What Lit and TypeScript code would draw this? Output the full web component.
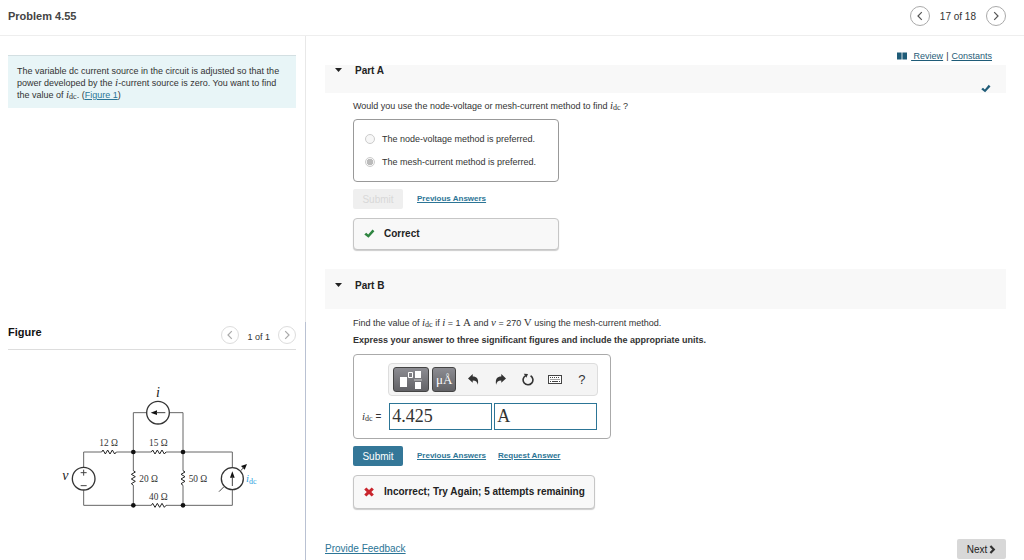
import { LitElement, html, svg, css } from "lit";
import { customElement, property, state } from "lit/decorators.js";

const chevron = (d: string) => html`<svg viewBox="0 0 10 10" width="10" height="10" aria-hidden="true">
  <path d=${d} fill="none" stroke="currentColor" stroke-width="1.2" />
</svg>`;
const LEFT = "M6.8 1.2 L3 5 L6.8 8.8";
const RIGHT = "M3.2 1.2 L7 5 L3.2 8.8";

const CHECK = "M0.3 6 L2.4 4 L4.6 6.1 L9.3 0.6 L11.4 2.5 L4.9 9.6 Z";
const CROSS = "M2.6 0.6 L5.5 3.3 L8.4 0.6 L10.8 2.8 L8 5.5 L10.8 8.2 L8.4 10.4 L5.5 7.7 L2.6 10.4 L0.2 8.2 L3 5.5 L0.2 2.8 Z";

const sub = () => html`<i class="m">i</i><sub>dc</sub>`;

const shared = css`
  * { box-sizing: border-box; }
  button, input { font-family: inherit; margin: 0; }
  button { cursor: pointer; }
  svg { display: block; }
  a { color: #2c7596; text-decoration: underline; }
  p, h1, h2 { margin: 0; }
  .m, sub, .r { font-family: "Liberation Serif", serif; line-height: 0; }
  .m, .r { font-size: 11px; }
  sub { font-size: 8px; vertical-align: -1px; }
`;

@customElement("page-stepper")
class PageStepper extends LitElement {
  @property() label = "";
  @property({ type: Boolean, reflect: true }) faint = false;

  static styles = [shared, css`
    :host { display: flex; align-items: center; gap: 10px; font-size: 10px; line-height: 12px; color: #333; }
    :host([faint]) { gap: 8px; font-size: 9px; }
    .round {
      display: grid; place-items: center; width: 20px; height: 20px; padding: 0;
      border: 1px solid #aaa; border-radius: 50%; background: #fff; color: #555;
    }
    :host([faint]) .round { width: 18px; height: 18px; border-color: #ddd; color: #aaa; }
    .label { padding-top: 3px; }
  `];

  render() {
    return html`
      <button class="round" aria-label="Previous">${chevron(LEFT)}</button>
      <span class="label">${this.label}</span>
      <button class="round" aria-label="Next">${chevron(RIGHT)}</button>`;
  }
}

@customElement("circuit-figure")
class CircuitFigure extends LitElement {
  static styles = [shared, css`
    :host { display: block; font-family: "Liberation Serif", serif; }
    .value { font-size: 28px; fill: #333; }
    .name { font-size: 42px; font-style: italic; fill: #222; }
    .source { font-size: 32px; font-style: italic; fill: #2f9fe0; }
    .small { font-size: 24px; font-style: normal; }
  `];

  private horizontal(x: number, y: number) {
    return svg`<path stroke="#222" stroke-width="3"
      d="M${x} ${y} l4 -6 l7 12 l7 -12 l7 12 l7 -12 l7 12 l5 -6" />`;
  }

  private vertical(x: number, y: number) {
    return svg`<path stroke="#222" stroke-width="3"
      d="M${x} ${y} l6 4 l-12 7 l12 7 l-12 7 l12 7 l-12 7 l6 5" />`;
  }

  render() {
    return html`<svg viewBox="0 0 660 435" width="220" height="145" role="img" aria-label="Circuit diagram">
      <g fill="none" stroke="#666" stroke-width="3">
        <path d="M101 278 V231 H155 M199 231 H304 M348 231 H547 V277 M547 345 V391 H348 M304 391 H101 V346" />
        <path d="M250 231 V287 M250 331 V391 M399 231 V287 M399 331 V391" />
        <path d="M250 231 V113 H290 M358 113 H399 V231" />
      </g>
      <g fill="none">
        ${this.horizontal(155, 231)} ${this.horizontal(304, 231)} ${this.horizontal(304, 391)}
        ${this.vertical(250, 287)} ${this.vertical(399, 287)}
      </g>
      <g fill="#fff" stroke="#333" stroke-width="4">
        <circle cx="324" cy="113" r="34" />
        <circle cx="101" cy="311" r="34" />
        <circle cx="547" cy="311" r="33" />
      </g>
      <g fill="#111">
        <circle cx="250" cy="231" r="7" /><circle cx="399" cy="231" r="7" />
        <circle cx="250" cy="391" r="7" /><circle cx="399" cy="391" r="7" />
        <path d="M302 113 L321 106 V120 Z" />
        <path d="M547 289 L540 308 H554 Z" />
        <path d="M591 267 L584 284 L573 273 Z" />
      </g>
      <path fill="none" stroke="#444" stroke-width="3"
        d="M318 113 H346 M547 304 V333 M507 350 L522 335 M572 287 L582 277 M92 293 H110 M101 284 V302 M92 332 H110" />
      <text class="name" x="318" y="66">i</text>
      <text class="name" x="37" y="316">v</text>
      <text class="value" x="148" y="212">12 Ω</text>
      <text class="value" x="297" y="212">15 Ω</text>
      <text class="value" x="268" y="320">20 Ω</text>
      <text class="value" x="416" y="320">50 Ω</text>
      <text class="value" x="297" y="374">40 Ω</text>
      <text class="source" x="588" y="321">i<tspan class="small" dy="5">dc</tspan></text>
    </svg>`;
  }
}

@customElement("answer-feedback")
class AnswerFeedback extends LitElement {
  @property({ type: Boolean }) correct = false;

  static styles = [shared, css`
    :host {
      display: flex; align-items: center; gap: 9px; width: fit-content; min-width: 206px; min-height: 32px;
      padding: 0 9px 0 10px; border: 1px solid #c6c6c6; border-radius: 4px; background: #f8f8f8;
      box-shadow: 0 1px 1px #ccc; font-size: 10px; line-height: 12px; font-weight: bold; color: #222;
    }
  `];

  render() {
    return html`
      <svg viewBox="0 0 12 11" width="11" height="10" aria-hidden="true">
        <path d=${this.correct ? CHECK : CROSS} fill=${this.correct ? "#2e8540" : "#c9252d"} />
      </svg>
      <slot></slot>`;
  }
}

@customElement("math-answer")
class MathAnswer extends LitElement {
  @state() private value = "4.425";
  @state() private unit = "A";

  static styles = [shared, css`
    :host {
      display: grid; grid-template-columns: auto auto; width: fit-content; align-items: center;
      column-gap: 7px; row-gap: 7px; padding: 8px 12px 8px 8px;
      border: 1px solid #aaa; border-radius: 4px; font-size: 10px; line-height: 12px; color: #333;
    }
    .tools {
      grid-column: 2; display: flex; align-items: center; padding: 3px 2px 3px 4px; height: 33px;
      border: 1px solid #ddd; border-radius: 4px; background: #f4f4f4;
    }
    .key {
      display: grid; place-items: center; height: 25px; padding: 0; color: #fff;
      border: 1px solid #444; border-radius: 3px; background: linear-gradient(#8c8c92, #626266);
    }
    .template { width: 36px; margin-right: 3px; }
    .symbols { width: 24px; margin-right: 4px; font-family: "Liberation Serif", serif; font-size: 13px; line-height: 20px; }
    .tool {
      display: grid; place-items: center; width: 27px; height: 25px; padding: 0;
      border: 0; background: none; color: #333; font-size: 13px;
    }
    .fields { display: flex; gap: 2px; padding: 0 1px; }
    .field {
      flex: 1; width: 103px; min-width: 0; height: 27px; padding: 0 2px; border: 1px solid #2c7596; border-radius: 0;
      background: #fff; color: #333; font-family: "Liberation Serif", serif; font-size: 18px;
    }
    .name { white-space: nowrap; }
  `];

  render() {
    return html`
      <div class="tools" role="toolbar">
        <button class="key template" aria-label="Templates">
          <svg viewBox="0 0 22 19" width="22" height="19">
            <path fill="#fff" d="M0 7 h7 v10 h-7 Z M15 1 h6 v7 h-6 Z M15 12 h6 v7 h-6 Z" />
            <path fill="none" stroke="#fff" stroke-width="1" d="M8.5 2.5 h4 v5 h-4 Z" />
            <path stroke="#ccc" stroke-width="1" d="M14 10 h8" />
          </svg>
        </button>
        <button class="key symbols" aria-label="Symbols">μÅ</button>
        <button class="tool" aria-label="Undo">
          <svg viewBox="0 0 10 10" width="11" height="11"><path fill="currentColor"
            d="M0 4 L4.3 0 V2.3 C7.8 2.3 10 4.2 9 9.8 C8.5 7 7.2 5.8 4.3 5.8 V8 Z" /></svg>
        </button>
        <button class="tool" aria-label="Redo">
          <svg viewBox="0 0 10 10" width="11" height="11"><path fill="currentColor"
            d="M10 4 L5.7 0 V2.3 C2.2 2.3 0 4.2 1 9.8 C1.5 7 2.8 5.8 5.7 5.8 V8 Z" /></svg>
        </button>
        <button class="tool" aria-label="Reset">
          <svg viewBox="0 0 12 13" width="12" height="13">
            <path fill="none" stroke="currentColor" stroke-width="1.6" d="M8.6 2.7 A4.9 4.9 0 1 1 3.6 2.6" />
            <path fill="currentColor" d="M1.8 0.8 L6 1 L4.4 4.8 Z" />
          </svg>
        </button>
        <button class="tool" aria-label="Keyboard shortcuts">
          <svg viewBox="0 0 14 9" width="14" height="9">
            <rect x="0.5" y="0.5" width="13" height="8" fill="#fff" stroke="#444" />
            <path stroke="#444" stroke-width="1" stroke-dasharray="1 1" d="M2 2.5 h10 M2.5 4.5 h10" />
            <path stroke="#444" stroke-width="1" d="M2 6.5 h1 M4 6.5 h6 M11 6.5 h1" />
          </svg>
        </button>
        <button class="tool" aria-label="Help">?</button>
      </div>
      <label class="name" for="value">${sub()} =</label>
      <div class="fields">
        <input class="field" id="value" .value=${this.value}
          @input=${(e: Event) => (this.value = (e.target as HTMLInputElement).value)} />
        <input class="field" aria-label="Units" .value=${this.unit}
          @input=${(e: Event) => (this.unit = (e.target as HTMLInputElement).value)} />
      </div>`;
  }
}

@customElement("app-root")
class AppRoot extends LitElement {
  static styles = [shared, css`
    :host {
      display: flex; flex-direction: column; min-height: 100vh; background: #fff; color: #333;
      font-family: "Liberation Sans", Arial, sans-serif; font-size: 9px; line-height: 12px;
    }
    .top {
      display: flex; justify-content: space-between; align-items: center; height: 36px;
      padding: 0 18px 4px 8px; border-bottom: 1px solid #eee;
    }
    .title { font-size: 11px; line-height: 14px; color: #444; }
    .columns { flex: 1; display: grid; grid-template-columns: 306px 1fr; }
    .side { display: flex; flex-direction: column; }
    .problem { flex: 1; padding: 19px 9px 0 8px; border-right: 1px solid #e8e8e8; }
    .statement {
      padding: 9px 9px 7px 9px; border-top: 1px solid #d3dfe2; background: #e8f5f7;
    }
    .figure { height: 238px; padding: 4px 9px 0 8px; border-right: 1px solid #b9c1d2; }
    .figure-bar {
      display: flex; justify-content: space-between; align-items: flex-start; height: 24px;
      border-bottom: 1px solid #ddd;
    }
    .figure-title { font-size: 11px; line-height: 12px; color: #111; }
    .drawing { padding: 25px 0 0 42px; }
    .main { display: flex; flex-direction: column; padding: 0 18px 1px 19px; }
    .links {
      display: flex; align-items: center; justify-content: flex-end; gap: 3px; height: 29px;
      padding: 11px 14px 0 0; color: #333;
    }
    .links a { color: #1f5c78; }
    .book { margin-right: 1px; }
    .part-head {
      display: flex; align-items: flex-start; gap: 12px; min-height: 40px; padding: 11px 15px 0 9px;
      background: #f8f8f8;
    }
    .tight { min-height: 28px; padding-top: 0; }
    .part-title { flex: 1; font-size: 10px; line-height: 12px; color: #222; }
    .arrow { margin-top: 1px; }
    .done { align-self: flex-end; }
    .part { display: flex; flex-direction: column; align-items: flex-start; padding: 7px 0 19px 28px; }
    .options {
      display: flex; flex-direction: column; gap: 11px; width: 206px; margin: 7px 0; padding: 13px 11px;
      border: 1px solid #999; border-radius: 4px;
    }
    .option { display: flex; align-items: center; gap: 7px; white-space: nowrap; }
    .radio {
      appearance: none; width: 10px; height: 10px; border: 1px solid #ccc; border-radius: 50%; background: #f7f7f7;
    }
    .radio:checked { background: radial-gradient(#bbb 0 3px, #f7f7f7 3px); }
    .actions { display: flex; align-items: center; gap: 12px; margin-bottom: 9px; font-size: 8px; font-weight: bold; }
    .submit {
      width: 50px; height: 20px; margin-right: 2px; padding: 0; border: 0; border-radius: 2px;
      background: #347798; color: #fff; font-size: 10px;
    }
    .submit:disabled { background: #efefef; color: #d8d8d8; }
    .question { padding: 1px 0 5px; }
    .instruction { font-weight: bold; }
    .answer { margin: 8px 0 7px; }
    .retry { min-height: 34px; }
    .bottom { display: flex; justify-content: space-between; align-items: center; margin-top: auto; font-size: 10px; }
    .next {
      display: flex; align-items: center; justify-content: center; gap: 2px; width: 49px; height: 20px; padding: 0;
      border: 0; border-radius: 2px; background: #d8d8d8; color: #222; font-size: 10px;
    }
  `];

  private arrow() {
    return html`<svg class="arrow" viewBox="0 0 9 8" width="9" height="8" aria-hidden="true">
      <path fill="#222" d="M1 2 H8 L4.5 6 Z" />
    </svg>`;
  }

  render() {
    return html`
      <header class="top">
        <h1 class="title">Problem 4.55</h1>
        <page-stepper label="17 of 18"></page-stepper>
      </header>
      <div class="columns">
        <aside class="side">
          <section class="problem">
            <p class="statement">The variable dc current source in the circuit is adjusted so that the
              power developed by the <i class="m">i</i>-current source is zero. You want to find
              the value of ${sub()}. (<a href="#figure">Figure 1</a>)</p>
          </section>
          <section class="figure" id="figure">
            <div class="figure-bar">
              <h2 class="figure-title">Figure</h2>
              <page-stepper faint label="1 of 1"></page-stepper>
            </div>
            <div class="drawing"><circuit-figure></circuit-figure></div>
          </section>
        </aside>
        <main class="main">
          <nav class="links">
            <svg class="book" viewBox="0 0 10 8" width="10" height="8" aria-hidden="true">
              <path fill="#1f5c78" d="M0 0.6 H4.6 V7.4 H0 Z M5.4 0.6 H10 V7.4 H5.4 Z" />
            </svg>
            <a href="#review">&nbsp;Review</a><span>|</span><a href="#constants">Constants</a>
          </nav>
          <div class="part-head tight">
            ${this.arrow()}
            <h2 class="part-title">Part A</h2>
            <svg class="done" viewBox="0 0 12 10" width="10" height="9" role="img" aria-label="Completed">
              <path fill="#1f5c78" d=${CHECK} />
            </svg>
          </div>
          <section class="part">
            <p>Would you use the node-voltage or mesh-current method to find ${sub()} ?</p>
            <div class="options" role="radiogroup">
              <label class="option"><input class="radio" type="radio" name="method" disabled />The node-voltage method is preferred.</label>
              <label class="option"><input class="radio" type="radio" name="method" checked disabled />The mesh-current method is preferred.</label>
            </div>
            <div class="actions">
              <button class="submit" disabled>Submit</button>
              <a href="#previous-a">Previous Answers</a>
            </div>
            <answer-feedback correct>Correct</answer-feedback>
          </section>
          <div class="part-head">
            ${this.arrow()}
            <h2 class="part-title">Part B</h2>
          </div>
          <section class="part">
            <p class="question">Find the value of ${sub()} if <i class="m">i</i> = 1 <span class="r">A</span> and <i class="m">v</i> = 270 <span class="r">V</span> using the mesh-current method.</p>
            <p class="instruction">Express your answer to three significant figures and include the appropriate units.</p>
            <math-answer class="answer"></math-answer>
            <div class="actions">
              <button class="submit">Submit</button>
              <a href="#previous-b">Previous Answers</a>
              <a href="#request">Request Answer</a>
            </div>
            <answer-feedback class="retry">Incorrect; Try Again; 5 attempts remaining</answer-feedback>
          </section>
          <footer class="bottom">
            <a href="#feedback">Provide Feedback</a>
            <button class="next">Next
              <svg viewBox="0 0 7 9" width="7" height="9" aria-hidden="true">
                <path fill="none" stroke="#333" stroke-width="2.2" d="M1.4 1 L4.8 4.5 L1.4 8" />
              </svg>
            </button>
          </footer>
        </main>
      </div>`;
  }
}
